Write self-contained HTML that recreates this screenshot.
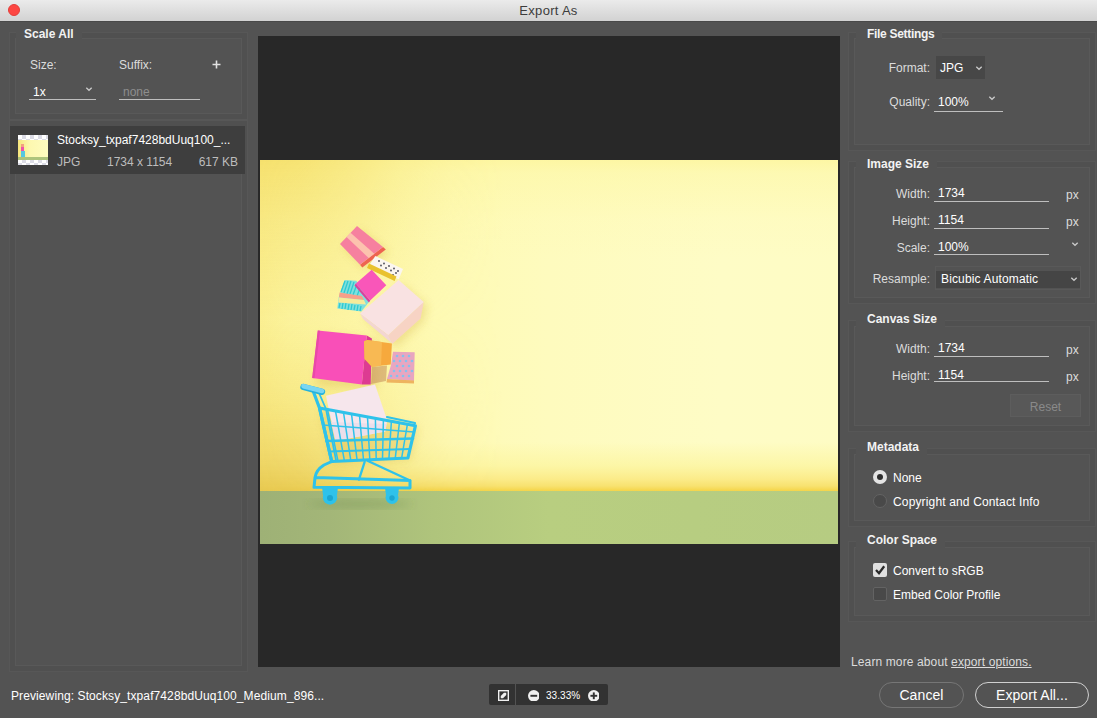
<!DOCTYPE html>
<html>
<head>
<meta charset="utf-8">
<title>Export As</title>
<style>
*{box-sizing:border-box;margin:0;padding:0}
html,body{width:1097px;height:718px;overflow:hidden;background:#535353}
body{font-family:"Liberation Sans",sans-serif;font-size:12px;color:#dcdcdc;position:relative}
.abs{position:absolute}
.t{position:absolute;white-space:nowrap;line-height:14px;height:14px}
.b{font-weight:bold;color:#f2f2f2;background:#535353;padding:0 8px 0 11px;height:17px}
.r{text-align:right}
.w{color:#ffffff}
.g{color:#bdbdbd}
.ul{position:absolute;height:1px;background:#bebebe}
.grp{position:absolute;border:1px solid #575757;box-shadow:inset 0 0 0 5px #505050,inset 0 0 0 6px #595959}
#titlebar{left:0;top:0;width:1097px;height:22px;background:linear-gradient(#ebebeb,#d2d2d2);border-bottom:1px solid #494949}
#title{left:0;top:3px;width:1097px;text-align:center;color:#3c3c3c;font-size:13px;letter-spacing:0.3px;line-height:16px;height:16px}
#close{left:7.6px;top:3.8px;width:12px;height:12px;border-radius:50%;background:#fd4642;border:0.5px solid #e33e3a}
#preview{left:257.5px;top:35.7px;width:582.5px;height:631.8px;background:#282828}
#photo{left:260px;top:160px;width:578px;height:384px;overflow:hidden}
.dd{position:absolute;background:#464646;border:1px solid #4e4e4e}
.pill{position:absolute;border-radius:13px;height:26px;text-align:center;font-size:14px;letter-spacing:0.1px;line-height:24px;color:#ffffff}
</style>
</head>
<body>
<!-- title bar -->
<div class="abs" id="titlebar"></div>
<div class="t" id="title">Export As</div>
<div class="abs" id="close"></div>

<!-- LEFT: Scale All -->
<div class="grp" style="left:9px;top:32px;width:239px;height:88px"></div>
<div class="t b" style="left:16px;top:27px;padding-left:8px">Scale All</div>
<div class="t" style="left:30px;top:58px">Size:</div>
<div class="t" style="left:119px;top:58px">Suffix:</div>
<svg class="abs" style="left:212px;top:60px" width="9" height="9" viewBox="0 0 9 9"><path d="M4.5 0.5 V8.5 M0.5 4.5 H8.5" stroke="#e2e2e2" stroke-width="1.6" fill="none"/></svg>
<div class="t w" style="left:33px;top:85px">1x</div>
<div class="ul" style="left:29px;top:99px;width:67px"></div>
<div class="t" style="left:119px;top:85px;color:#8e8e8e;padding-left:4px">none</div>
<div class="ul" style="left:119px;top:99px;width:81px"></div>

<!-- LEFT: list -->
<div class="grp" style="left:9px;top:120px;width:239px;height:552px"></div>
<div class="abs" style="left:10px;top:126px;width:235px;height:48px;background:#3e3e3e"></div>
<div class="abs" style="left:18px;top:135px;width:30px;height:30px;background:#fff;background-image:linear-gradient(45deg,#dcdce6 25%,transparent 25%,transparent 75%,#dcdce6 75%),linear-gradient(45deg,#dcdce6 25%,transparent 25%,transparent 75%,#dcdce6 75%);background-size:8px 8px;background-position:0 0,4px 4px"></div>
<div class="abs" style="left:18px;top:140px;width:30px;height:20px;background:linear-gradient(90deg,#f6e67c,#fdf8b0 40%,#fefcc0)"></div>
<div class="abs" style="left:18px;top:157px;width:30px;height:3px;background:#aec47c"></div>
<div class="abs" style="left:21px;top:144px;width:3px;height:3px;background:#f4a080"></div>
<div class="abs" style="left:21px;top:147px;width:3px;height:4px;background:#f050a8"></div>
<div class="abs" style="left:21px;top:151px;width:4px;height:6px;background:#58c8e0"></div>
<svg class="abs" style="left:84px;top:85px" width="10" height="8" viewBox="0 0 10 8"><path d="M2.3 2.8 L5 5.3 L7.7 2.8" fill="none" stroke="#cacaca" stroke-width="1.3"/></svg>
<div class="t w" style="left:57px;top:133px">Stocksy_txpaf7428bdUuq100_...</div>
<div class="t g" style="left:57px;top:155px">JPG</div>
<div class="t g" style="left:107px;top:155px">1734 x 1154</div>
<div class="t g r" style="left:178px;top:155px;width:60px">617 KB</div>

<!-- CENTER -->
<div class="abs" id="preview"></div>
<div class="abs" id="photo">
<svg width="578" height="384" viewBox="0 0 578 384" style="display:block">
<defs>
<linearGradient id="bgH" x1="0" x2="1" y1="0" y2="0">
<stop offset="0" stop-color="#fbf094"/><stop offset="0.05" stop-color="#fcf49e"/><stop offset="0.15" stop-color="#fdf6a6"/><stop offset="0.3" stop-color="#fefab4"/><stop offset="0.5" stop-color="#fefbbe"/><stop offset="0.8" stop-color="#fefcc6"/><stop offset="1" stop-color="#fefcc4"/>
</linearGradient>
<linearGradient id="bgV" x1="0" x2="0" y1="0" y2="1">
<stop offset="0" stop-color="#fdf59c" stop-opacity="0.8"/><stop offset="0.04" stop-color="#fdf6a0" stop-opacity="0.5"/><stop offset="0.18" stop-color="#fdf6a0" stop-opacity="0.12"/><stop offset="0.3" stop-color="#fdf6a0" stop-opacity="0"/><stop offset="0.85" stop-color="#fcf5a0" stop-opacity="0"/><stop offset="0.92" stop-color="#fcf5a0" stop-opacity="0.8"/><stop offset="0.962" stop-color="#fbeb88" stop-opacity="1"/><stop offset="0.982" stop-color="#f8e270" stop-opacity="1"/><stop offset="0.994" stop-color="#f5d750" stop-opacity="1"/><stop offset="1" stop-color="#f3d048" stop-opacity="1"/>
</linearGradient>
<linearGradient id="vigV" x1="0" x2="0" y1="0" y2="1">
<stop offset="0" stop-color="#f4de68" stop-opacity="0.9"/><stop offset="0.18" stop-color="#f5e274" stop-opacity="0.6"/><stop offset="0.48" stop-color="#f6e478" stop-opacity="0.08"/><stop offset="0.72" stop-color="#f3de6e" stop-opacity="0.55"/><stop offset="0.88" stop-color="#eed462" stop-opacity="0.85"/><stop offset="1" stop-color="#e6c850" stop-opacity="0.98"/>
</linearGradient>
<linearGradient id="vigM" x1="0" x2="1" y1="0" y2="0">
<stop offset="0" stop-color="#fff"/><stop offset="0.07" stop-color="#ddd"/><stop offset="0.15" stop-color="#9a9a9a"/><stop offset="0.24" stop-color="#484848"/><stop offset="0.33" stop-color="#141414"/><stop offset="0.42" stop-color="#000"/>
</linearGradient>
<mask id="vigMask"><rect width="578" height="332" fill="url(#vigM)"/></mask>
<linearGradient id="flH" x1="0" x2="1" y1="0" y2="0">
<stop offset="0" stop-color="#9eb176"/><stop offset="0.12" stop-color="#a3b678"/><stop offset="0.3" stop-color="#afc47c"/><stop offset="0.5" stop-color="#b8ce80"/><stop offset="1" stop-color="#b6cc82"/>
</linearGradient>
<filter id="soft" x="-5%" y="-5%" width="110%" height="110%"><feGaussianBlur stdDeviation="0.45"/></filter>
<filter id="shadow" x="-20%" y="-20%" width="140%" height="140%"><feGaussianBlur stdDeviation="4"/></filter>
</defs>
<rect width="578" height="332" fill="url(#bgH)"/>
<rect width="578" height="332" fill="url(#bgV)"/>
<rect width="578" height="332" fill="url(#vigV)" mask="url(#vigMask)"/>
<rect y="331" width="578" height="53" fill="url(#flH)"/>

<g filter="url(#soft)">
<!-- soft shadows on wall -->
<g filter="url(#shadow)" opacity="0.25" fill="#c9a030">
<polygon points="60,175 118,180 116,230 56,226"/>
<polygon points="104,158 142,124 168,146 164,162 136,188"/>
<polygon points="84,88 101,70 129,92 105,110"/>
<polygon points="60,250 158,268 150,300 72,304"/>
</g>
<g filter="url(#shadow)" opacity="0.35" fill="#6d8a50"><ellipse cx="100" cy="344" rx="52" ry="4"/></g>
<!-- top pink striped box -->
<polygon points="100,104.7 123,87 125.8,89.5 102.3,107.5" fill="#ee6350"/>
<polygon points="80,84 97,66 123,87 100,104.7" fill="#f6809f"/>
<polygon points="86.5,77.1 90.5,72.7 114.3,93.7 108.7,98" fill="#fcc2ae"/>
<!-- polka dot box -->
<polygon points="115.3,96 143,109 138.7,119.3 109.5,104.7" fill="#fbf6f0"/>
<g fill="#4a4a58"><circle cx="119" cy="101" r="0.9"/><circle cx="124" cy="103.5" r="0.9"/><circle cx="129" cy="106" r="0.9"/><circle cx="134" cy="108.5" r="0.9"/><circle cx="121" cy="105.5" r="0.9"/><circle cx="126" cy="108" r="0.9"/><circle cx="131" cy="110.5" r="0.9"/><circle cx="136" cy="113" r="0.9"/><circle cx="133" cy="115" r="0.9"/><circle cx="138" cy="111" r="0.9"/></g>
<polygon points="109,103.4 136.5,116.4 134.6,121 107,108" fill="#e9c22e"/>
<!-- teal striped box -->
<polygon points="84.6,120 96.3,120.8 109.5,141.3 101.4,151.5 77.3,148.6 78.8,136.9" fill="#7fe0dc"/>
<g stroke="#2fc9d2" stroke-width="1.3">
<line x1="85" y1="121" x2="81" y2="132"/><line x1="88" y1="121" x2="84" y2="133"/><line x1="91" y1="121" x2="87" y2="134"/><line x1="94" y1="122" x2="90" y2="134"/><line x1="97" y1="124" x2="93" y2="135"/><line x1="100" y1="128" x2="97" y2="136"/>
<line x1="80" y1="143" x2="79" y2="148"/><line x1="83" y1="143" x2="82" y2="149"/><line x1="86" y1="143" x2="85" y2="149"/><line x1="89" y1="144" x2="88" y2="150"/><line x1="92" y1="144" x2="91" y2="150"/><line x1="95" y1="145" x2="94" y2="150"/><line x1="98" y1="145" x2="97" y2="151"/><line x1="101" y1="146" x2="100" y2="151"/>
</g>
<polygon points="79.5,132.5 102,136 104,140 79,137.5" fill="#f7a08a"/>
<polygon points="79,137.5 104,140 106,144.5 78.3,142.5" fill="#f6eb9a"/>
<!-- big light pink box -->
<polygon points="163.7,142 160.6,158.6 132.4,183.7 128.2,175.3" fill="#f7d3c4"/>
<polygon points="100,153.4 138.6,120 163.7,142 128.2,175.3" fill="#f9e2e2"/>
<polygon points="100,153.4 128.2,175.3 132.4,183.7 103,159" fill="#f3d6d2"/>
<!-- small magenta box -->
<polygon points="95.6,123.7 111.7,109.8 126.3,125.2 110.2,140.5" fill="#f957b9"/>
<polygon points="95.6,123.7 110.2,140.5 109,142.5 94.6,125.6" fill="#d9409c"/>
<!-- large magenta box -->
<polygon points="106.8,175.6 111.9,178.4 110.7,224.6 101.8,224.6" fill="#dd3a92"/>
<polygon points="57.8,170.6 106.8,175.6 101.8,224.6 52.2,218" fill="#f950b8"/>
<polygon points="57.8,170.6 60,170.8 54.5,218.3 52.2,218" fill="#e848a8"/>
<!-- dotted pink/blue box -->
<polygon points="112,207 127,205.5 126,221 111,224" fill="#c58a58" opacity="0.55"/>
<polygon points="133,191.8 154.7,192.3 154,221 127,219 131,205" fill="#e8a6c0"/>
<g fill="#86c0ec"><circle cx="137" cy="196" r="1.3"/><circle cx="143" cy="196" r="1.3"/><circle cx="149" cy="196" r="1.3"/><circle cx="134" cy="201" r="1.3"/><circle cx="140" cy="201" r="1.3"/><circle cx="146" cy="201" r="1.3"/><circle cx="152" cy="201" r="1.3"/><circle cx="137" cy="206" r="1.3"/><circle cx="143" cy="206" r="1.3"/><circle cx="149" cy="206" r="1.3"/><circle cx="134" cy="211" r="1.3"/><circle cx="140" cy="211" r="1.3"/><circle cx="146" cy="211" r="1.3"/><circle cx="152" cy="211" r="1.3"/><circle cx="131" cy="216" r="1.3"/><circle cx="137" cy="216" r="1.3"/><circle cx="143" cy="216" r="1.3"/><circle cx="149" cy="216" r="1.3"/></g>
<polygon points="127,219 154,220.5 154,223.5 126.5,222.5" fill="#eeb45e"/>
<!-- orange box -->
<polygon points="104,181.2 107.4,180 131.9,183.4 130.8,204.6 111.9,206.8 104.6,199" fill="#f6a93e"/>
<polygon points="104,181.2 107.4,180 122,182 121,205.7 111.9,206.8 104.6,199" fill="#f8b952"/>
<!-- white box in cart -->
<polygon points="66,235.7 115,224.4 127.2,260.2 125.3,271.4 75.5,280.9" fill="#f6e6ec"/>
<polygon points="71,262 126.5,264 125.3,271.4 75.5,280.9" fill="#e9dcea" opacity="0.8"/>
<g fill="none" stroke="#2fc2ea" stroke-linecap="round" stroke-linejoin="round">
<line x1="67.5" y1="249.5" x2="78.0" y2="301.2" stroke-width="1.5"/>
<line x1="75.5" y1="251.0" x2="84.4" y2="300.9" stroke-width="1.5"/>
<line x1="83.5" y1="252.4" x2="90.8" y2="300.6" stroke-width="1.5"/>
<line x1="91.5" y1="253.9" x2="97.1" y2="300.3" stroke-width="1.5"/>
<line x1="99.5" y1="255.4" x2="103.5" y2="300.0" stroke-width="1.5"/>
<line x1="107.5" y1="256.9" x2="109.8" y2="299.8" stroke-width="1.5"/>
<line x1="115.4" y1="258.4" x2="116.2" y2="299.5" stroke-width="1.5"/>
<line x1="123.4" y1="259.9" x2="122.5" y2="299.2" stroke-width="1.5"/>
<line x1="131.4" y1="261.4" x2="128.9" y2="298.9" stroke-width="1.5"/>
<line x1="139.4" y1="262.8" x2="135.2" y2="298.6" stroke-width="1.5"/>
<line x1="147.4" y1="264.3" x2="141.6" y2="298.3" stroke-width="1.5"/>
<path d="M66.5 281 L153 278.5" stroke-width="2.6"/>
<path d="M69 291.5 L150 289" stroke-width="1.8"/>
<path d="M63 265 L154 272" stroke-width="1.3"/>
<path d="M59.5 248 L155.4 265.8 L147.9 298 L71.7 301.5 Z" stroke-width="3.2"/>
<path d="M127 257 L155 263" stroke-width="2.2"/>
<path d="M53.5 232 L59.5 248 L71.7 301.5" stroke-width="3.2"/>
<path d="M59 233 L66 249 L76 300" stroke-width="1.8"/>
<path d="M71.7 301.5 L64 305 Q56 310 55 317.5 L54 327.3 L150 328 L150 320.5 L56 317.5" stroke-width="3"/>
<path d="M104.6 302 L99 319.5 M108 301 L150 320.5" stroke-width="2.4"/>
</g>
<line x1="43.5" y1="227" x2="62" y2="231.8" stroke="#25b2dc" stroke-width="6.4" stroke-linecap="round"/>
<line x1="43.5" y1="226.2" x2="62" y2="231" stroke="#7ad6f2" stroke-width="4.6" stroke-linecap="round"/>
<g fill="#2fc2ea"><path d="M62 327 L78 327 L77 335 L63 335 Z"/><circle cx="70" cy="337.5" r="7.2"/><path d="M125 328 L139 328 L138 335 L126 335 Z"/><circle cx="132" cy="337.5" r="6.5"/></g>
<g fill="#1ea6d0"><circle cx="70" cy="338" r="3"/><circle cx="132" cy="338" r="2.7"/></g>
</g>

</svg>
</div>

<!-- RIGHT panels inserted below -->

<!-- File Settings -->
<div class="grp" style="left:848px;top:32px;width:248px;height:119px"></div>
<div class="t b" style="left:856px;top:27px;letter-spacing:-0.3px">File Settings</div>
<div class="t r" style="left:860px;top:61px;width:70px">Format:</div>
<div class="abs" style="left:936px;top:56px;width:49px;height:23px;background:#474747"></div>
<div class="t w" style="left:940px;top:61px">JPG</div>
<svg class="abs" style="left:974px;top:64px" width="10" height="8" viewBox="0 0 10 8"><path d="M2.3 2.8 L5 5.3 L7.7 2.8" fill="none" stroke="#cacaca" stroke-width="1.3"/></svg>
<div class="t r" style="left:860px;top:95px;width:70px">Quality:</div>
<div class="t w" style="left:938px;top:95px">100%</div>
<div class="ul" style="left:934px;top:111px;width:69px"></div>
<svg class="abs" style="left:987px;top:94px" width="10" height="8" viewBox="0 0 10 8"><path d="M2.3 2.8 L5 5.3 L7.7 2.8" fill="none" stroke="#cacaca" stroke-width="1.3"/></svg>

<!-- Image Size -->
<div class="grp" style="left:848px;top:161px;width:248px;height:143px"></div>
<div class="t b" style="left:856px;top:157px">Image Size</div>
<div class="t r" style="left:860px;top:187px;width:70px">Width:</div>
<div class="t w" style="left:938px;top:186px">1734</div>
<div class="ul" style="left:934px;top:201px;width:115px"></div>
<div class="t" style="left:1066px;top:188px">px</div>
<div class="t r" style="left:860px;top:214px;width:70px">Height:</div>
<div class="t w" style="left:938px;top:213px">1154</div>
<div class="ul" style="left:934px;top:228px;width:115px"></div>
<div class="t" style="left:1066px;top:215px">px</div>
<div class="t r" style="left:860px;top:241px;width:70px">Scale:</div>
<div class="t w" style="left:938px;top:240px">100%</div>
<div class="ul" style="left:934px;top:254px;width:115px"></div>
<svg class="abs" style="left:1070px;top:240px" width="10" height="8" viewBox="0 0 10 8"><path d="M2.3 2.8 L5 5.3 L7.7 2.8" fill="none" stroke="#cacaca" stroke-width="1.3"/></svg>
<div class="t r" style="left:860px;top:272px;width:70px">Resample:</div>
<div class="abs" style="left:935px;top:266px;width:146px;height:24px;border:1px solid #595959"></div><div class="abs" style="left:936px;top:271px;width:144px;height:17px;background:#454545"></div>
<div class="t w" style="left:941px;top:272px;letter-spacing:0.15px">Bicubic Automatic</div>
<svg class="abs" style="left:1069px;top:275px" width="10" height="8" viewBox="0 0 10 8"><path d="M2.3 2.8 L5 5.3 L7.7 2.8" fill="none" stroke="#cacaca" stroke-width="1.3"/></svg>

<!-- Canvas Size -->
<div class="grp" style="left:848px;top:320px;width:248px;height:112px"></div>
<div class="t b" style="left:856px;top:312px">Canvas Size</div>
<div class="t r" style="left:860px;top:342px;width:70px">Width:</div>
<div class="t w" style="left:938px;top:341px">1734</div>
<div class="ul" style="left:934px;top:356px;width:115px"></div>
<div class="t" style="left:1066px;top:343px">px</div>
<div class="t r" style="left:860px;top:369px;width:70px">Height:</div>
<div class="t w" style="left:938px;top:368px">1154</div>
<div class="ul" style="left:934px;top:381px;width:115px"></div>
<div class="t" style="left:1066px;top:370px">px</div>
<div class="abs" style="left:1010px;top:394px;width:71px;height:23px;background:#585858;border:1px solid #5d5d5d"></div>
<div class="t" style="left:1010px;top:400px;width:71px;text-align:center;color:#8a8a8a">Reset</div>

<!-- Metadata -->
<div class="grp" style="left:848px;top:448px;width:248px;height:79px"></div>
<div class="t b" style="left:856px;top:440px">Metadata</div>
<div class="abs" style="left:873px;top:470px;width:14px;height:14px;border-radius:50%;background:#e4e4e4"></div>
<div class="abs" style="left:877px;top:474px;width:6px;height:6px;border-radius:50%;background:#2e2e2e"></div>
<div class="t w" style="left:893px;top:471px">None</div>
<div class="abs" style="left:873px;top:494px;width:14px;height:14px;border-radius:50%;background:#494949;border:1px solid #636363"></div>
<div class="t w" style="left:893px;top:495px;letter-spacing:0.15px">Copyright and Contact Info</div>

<!-- Color Space -->
<div class="grp" style="left:848px;top:541px;width:248px;height:81px"></div>
<div class="t b" style="left:856px;top:533px">Color Space</div>
<div class="abs" style="left:873px;top:563px;width:14px;height:14px;border-radius:2px;background:#e0e0e0"></div>
<svg class="abs" style="left:873px;top:563px" width="14" height="14" viewBox="0 0 14 14"><path d="M3 7 L6 10.2 L11.2 3.2" fill="none" stroke="#2a2a2a" stroke-width="2.3"/></svg>
<div class="t w" style="left:893px;top:564px">Convert to sRGB</div>
<div class="abs" style="left:873px;top:587px;width:14px;height:14px;border-radius:2px;background:#494949;border:1px solid #636363"></div>
<div class="t w" style="left:893px;top:588px">Embed Color Profile</div>

<div class="t" style="left:851px;top:655px;letter-spacing:0.12px">Learn more about <span style="text-decoration:underline">export options.</span></div>


<!-- BOTTOM -->

<div class="t w" style="left:11px;top:689px;letter-spacing:0.1px">Previewing: Stocksy_txpaf7428bdUuq100_Medium_896...</div>
<div class="abs" style="left:489px;top:684px;width:119px;height:21px;background:#323232;border-radius:2px"></div>
<div class="abs" style="left:515px;top:684px;width:1px;height:21px;background:#535353"></div>
<!-- fit icon -->
<svg class="abs" style="left:498px;top:689.5px" width="11" height="11" viewBox="0 0 12 12"><rect x="0.75" y="0.75" width="10.5" height="10.5" fill="none" stroke="#f0f0f0" stroke-width="1.5"/><path d="M3 9 L3 6.5 L6.5 3 L9 3 L9 5.5 L5.5 9 Z" fill="#f0f0f0"/></svg>
<!-- minus -->
<svg class="abs" style="left:527.7px;top:689.6px" width="11.6" height="11.6" viewBox="0 0 12 12"><circle cx="6" cy="6" r="6" fill="#f0f0f0"/><rect x="2.5" y="5" width="7" height="2" fill="#323232"/></svg>
<div class="t w" style="left:546px;top:688.5px;font-size:10px;letter-spacing:0.05px">33.33%</div>
<!-- plus -->
<svg class="abs" style="left:587.5px;top:689.6px" width="11.6" height="11.6" viewBox="0 0 12 12"><circle cx="6" cy="6" r="6" fill="#f0f0f0"/><rect x="2.5" y="5" width="7" height="2" fill="#323232"/><rect x="5" y="2.5" width="2" height="7" fill="#323232"/></svg>
<div class="pill" style="left:879px;top:682px;width:85px;border:1px solid #767676">Cancel</div>
<div class="pill" style="left:975px;top:682px;width:114px;border:1px solid #d0d0d0">Export All...</div>

</body>
</html>
